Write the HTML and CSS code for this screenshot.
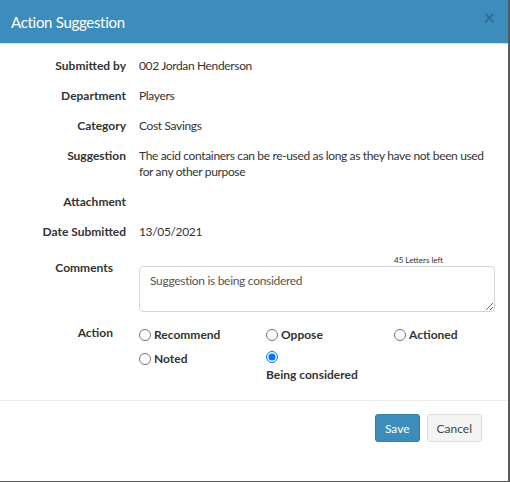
FILE: index.html
```html
<!DOCTYPE html>
<html lang="en">
<head>
<meta charset="utf-8">
<title>Action Suggestion</title>
<link rel="stylesheet" href="styles.css">
</head>
<body>
<div class="modal">
  <div class="modal-header">
    <h4 class="modal-title">Action Suggestion</h4>
    <span class="close">&times;</span>
  </div>
  <div class="modal-body">
    <div class="details">
      <div class="lbl">Submitted by</div><div class="val">002 Jordan Henderson</div>
      <div class="lbl">Department</div><div class="val">Players</div>
      <div class="lbl">Category</div><div class="val">Cost Savings</div>
      <div class="lbl">Suggestion</div><div class="val">The acid containers can be re-used as long as they have not been used for any other purpose</div>
      <div class="lbl">Attachment</div><div class="val"></div>
      <div class="lbl">Date Submitted</div><div class="val">13/05/2021</div>
    </div>
    <div class="form">
      <div class="flbl lbl-comments">Comments</div>
      <div class="fval">
        <div class="counter">45 Letters left</div>
        <textarea class="textarea">Suggestion is being considered</textarea>
      </div>
      <div class="flbl lbl-action">Action</div>
      <div class="fval radios">
        <label class="radio"><input type="radio" name="act">Recommend</label>
        <label class="radio"><input type="radio" name="act">Oppose</label>
        <label class="radio"><input type="radio" name="act">Actioned</label>
        <label class="radio"><input type="radio" name="act">Noted</label>
        <label class="radio stacked"><input type="radio" name="act" checked><span>Being considered</span></label>
      </div>
    </div>
  </div>
  <div class="modal-footer">
    <button class="btn btn-primary">Save</button>
    <button class="btn btn-default">Cancel</button>
  </div>
</div>
</body>
</html>
```

FILE: styles.css
```css
html, body {
  margin: 0;
  padding: 0;
  background: #5a5a5a;
  width: 510px;
  height: 482px;
  overflow: hidden;
}
body {
  font-family: Lato, "Liberation Sans", sans-serif;
  font-size: 12px;
  color: #333;
}
.modal {
  width: 508px;
  height: 481px;
  background: #fff;
  display: flex;
  flex-direction: column;
}
.modal-header {
  height: 43px;
  background: #3c8dbc;
  border-bottom: 1px solid #cfe2ee;
  display: flex;
  align-items: center;
  justify-content: space-between;
  padding: 0 13px 0 11px;
  box-sizing: content-box;
}
.modal-title {
  margin: 0;
  font-weight: 400;
  font-size: 15px;
  letter-spacing: -0.3px;
  color: #fff;
  line-height: 20px;
}
.close {
  color: #2d6e95;
  font-size: 20px;
  font-weight: 700;
  line-height: 1;
  margin-top: -9px;
}
.modal-body {
  padding: 14px 13px 0 0;
}
.details {
  display: grid;
  grid-template-columns: 126px 1fr;
  column-gap: 13px;
  row-gap: 14px;
  line-height: 16px;
}
.lbl {
  text-align: right;
  font-weight: 700;
}
.val {
  min-height: 16px;
  letter-spacing: -0.35px;
}
.form {
  display: grid;
  grid-template-columns: 113px 1fr;
  column-gap: 26px;
  margin-top: 14px;
  row-gap: 13px;
}
.flbl {
  text-align: right;
  font-weight: 700;
  line-height: 16px;
}
.lbl-comments { padding-top: 6px; }
.lbl-action { padding-top: 0; }
.counter {
  font-size: 8px;
  line-height: 12px;
  text-align: right;
  margin-right: 52px;
}
.textarea {
  display: block;
  width: 356px;
  height: 46px;
  box-sizing: border-box;
  border: 1px solid #d2d6de;
  border-radius: 4px;
  padding: 6px 10px;
  font-family: inherit;
  font-size: 12px;
  letter-spacing: -0.3px;
  color: #555;
  line-height: 16px;
  resize: vertical;
}
.radios {
  display: grid;
  grid-template-columns: 127px 128px 100px;
  row-gap: 6px;
  font-weight: 700;
}
.radio {
  display: flex;
  align-items: center;
  line-height: 16px;
  height: 16px;
  margin-top: 2px;
}
.radio input {
  margin: 0 3px 0 0;
  width: 12px;
  height: 12px;
}
.radio.stacked {
  flex-direction: column;
  align-items: flex-start;
  height: auto;
}
.radio.stacked span {
  margin-top: 4px;
}
.modal-footer {
  margin-top: auto;
  border-top: 1px solid #eee;
  padding: 13px 26px 39px 0;
  display: flex;
  justify-content: flex-end;
  gap: 7px;
}
.btn {
  font-family: inherit;
  font-size: 12px;
  height: 28px;
  padding: 0 9px;
  border-radius: 3px;
  border: 1px solid transparent;
  cursor: pointer;
}
.btn-primary {
  background: #3c8dbc;
  border-color: #367fa9;
  color: #fff;
}
.btn-default {
  background: #f4f4f4;
  border-color: #ddd;
  color: #444;
}
```
